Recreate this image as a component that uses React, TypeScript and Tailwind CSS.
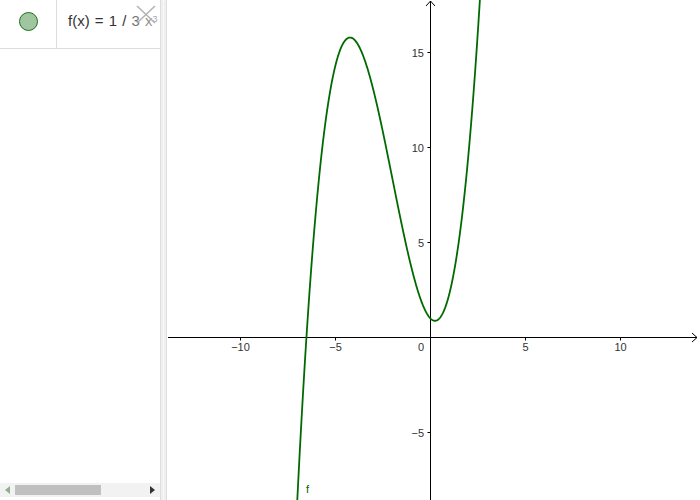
import React from "react";

// graphics view: origin in page pixels, 19 px per unit
const OX = 430.5;
const OY = 337.5;
const SCALE = 19;

function f(x: number): number {
  return (x * x * x) / 3 + 2 * x * x - x + 1;
}

function curvePath(): string {
  const pts: string[] = [];
  for (let x = -7.3; x <= 2.8; x += 0.02) {
    const px = OX + x * SCALE;
    const py = OY - f(x) * SCALE;
    pts.push(`${pts.length === 0 ? "M" : "L"}${px.toFixed(2)} ${py.toFixed(2)}`);
  }
  return pts.join(" ");
}

const xTicks = [-10, -5, 5, 10];
const yTicks = [15, 10, 5, -5];

function label(n: number): string {
  return n < 0 ? `\u2212${Math.abs(n)}` : `${n}`;
}

function GraphicsView() {
  return (
    <svg
      className="block h-full w-full"
      viewBox="167 0 533 500"
      style={{ fontFamily: '"Liberation Sans", Arial, sans-serif' }}
    >
      <rect x={167} y={0} width={533} height={500} fill="#ffffff" />
      {/* x axis */}
      <line x1={168} y1={OY} x2={697} y2={OY} stroke="#000" strokeWidth={1} />
      <path d="M692 333 L697 337.5 L692 342" fill="none" stroke="#000" strokeWidth={1} />
      {/* y axis */}
      <line x1={OX} y1={1} x2={OX} y2={500} stroke="#000" strokeWidth={1} />
      <path d="M426 6 L430.5 1 L435 6" fill="none" stroke="#000" strokeWidth={1} />

      {xTicks.map((t) => {
        const px = OX + t * SCALE;
        return (
          <g key={`x${t}`}>
            <line x1={px} y1={OY} x2={px} y2={OY + 3} stroke="#000" strokeWidth={1} />
            <text x={px} y={351} textAnchor="middle" fontSize={11} fill="#333">
              {label(t)}
            </text>
          </g>
        );
      })}
      <text x={421} y={351} textAnchor="middle" fontSize={11} fill="#333">
        0
      </text>

      {yTicks.map((t) => {
        const py = OY - t * SCALE;
        return (
          <g key={`y${t}`}>
            <line x1={OX - 3} y1={py} x2={OX} y2={py} stroke="#000" strokeWidth={1} />
            <text x={424} y={py + 4} textAnchor="end" fontSize={11} fill="#333">
              {label(t)}
            </text>
          </g>
        );
      })}

      <path d={curvePath()} fill="none" stroke="#006a00" strokeWidth={1.8} />
      <text x={306} y={493} fontSize={11} fill="#006400">
        f
      </text>
    </svg>
  );
}

export default function App() {
  return (
    <div
      className="flex h-[500px] w-[700px] overflow-hidden bg-white"
      style={{ fontFamily: '"Liberation Sans", Arial, sans-serif' }}
    >
      {/* algebra view */}
      <div className="flex w-[160px] shrink-0 flex-col">
        <div className="flex h-[49px] border-b border-[#dcdcdc]">
          <div className="flex w-[57px] shrink-0 items-center justify-center border-r border-[#dcdcdc] pb-[5px]">
            <div className="h-[19px] w-[19px] rounded-full border border-[#1e6e1e] bg-[#9fc69f]" />
          </div>
          <div className="relative flex-1 overflow-hidden">
            <div className="absolute left-[11px] top-[11px] whitespace-nowrap text-[15px] leading-[20px] text-[#333] [word-spacing:1px]">
              f(x) = 1 / 3 x<sup className="text-[9px]">3</sup>
            </div>
            <div className="absolute right-0 top-0 h-full w-[34px] bg-gradient-to-r from-white/20 to-white/60" />
            <svg className="absolute left-[79px] top-[5px]" width="20" height="19" viewBox="0 0 20 19">
              <path d="M1 1 L19 18 M19 1 L1 18" stroke="#b4b4b4" strokeWidth={1.6} />
            </svg>
          </div>
        </div>
        <div className="flex-1" />
        <div className="mb-[3px] flex h-[14px] items-center bg-[#f2f2f2]">
          <svg className="ml-[5px]" width="5" height="8" viewBox="0 0 5 8">
            <path d="M5 0 L0 4 L5 8 Z" fill="#8fb18f" />
          </svg>
          <div className="ml-[5px] h-[10px] w-[86px] bg-[#c0c0c0]" />
          <div className="flex-1" />
          <svg className="mr-[5px]" width="5" height="8" viewBox="0 0 5 8">
            <path d="M0 0 L5 4 L0 8 Z" fill="#333" />
          </svg>
        </div>
      </div>

      {/* divider */}
      <div className="flex w-[7px] shrink-0 justify-center border-x border-[#dedede] bg-[#efefef]">
        <div className="h-full w-px border-l border-dotted border-[#ffffff]" />
      </div>

      {/* graphics view */}
      <div className="flex-1">
        <GraphicsView />
      </div>
    </div>
  );
}
